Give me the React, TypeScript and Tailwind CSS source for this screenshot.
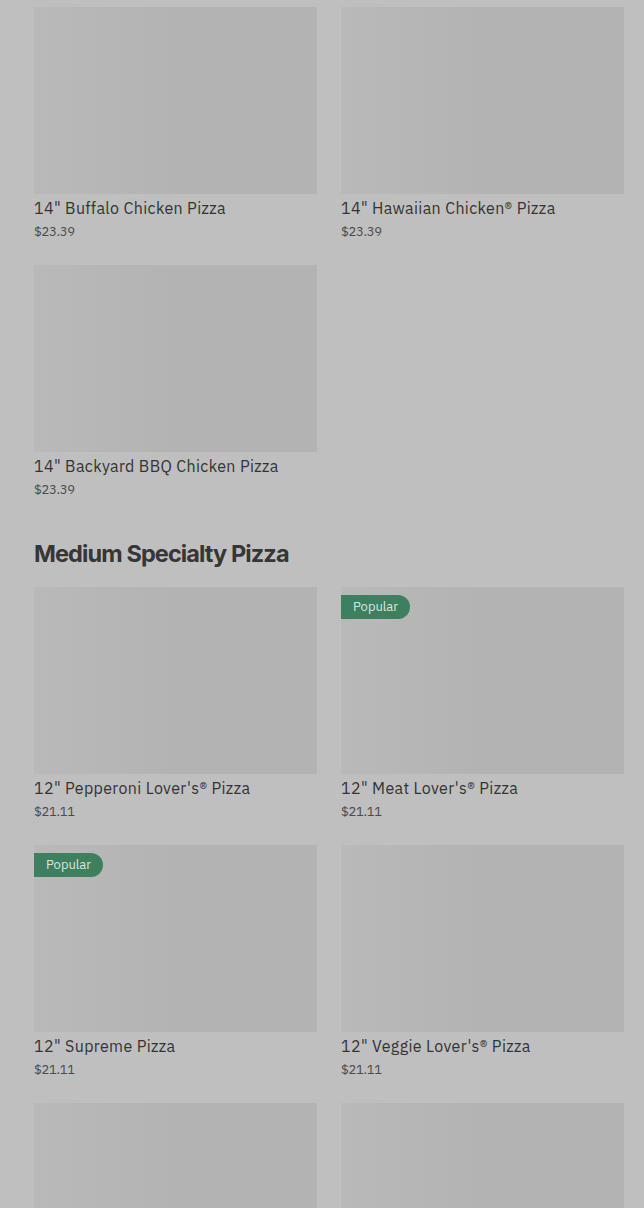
import React from "react";

type Pizza = { name?: string; price?: string; popular?: boolean };

const chicken: Pizza[] = [
  { name: "14\" Buffalo Chicken Pizza", price: "$23.39" },
  { name: "14\" Hawaiian Chicken® Pizza", price: "$23.39" },
  { name: "14\" Backyard BBQ Chicken Pizza", price: "$23.39" },
];

// last row is cut off by the frame, only the images show
const medium: Pizza[] = [
  { name: "12\" Pepperoni Lover's® Pizza", price: "$21.11" },
  { name: "12\" Meat Lover's® Pizza", price: "$21.11", popular: true },
  { name: "12\" Supreme Pizza", price: "$21.11", popular: true },
  { name: "12\" Veggie Lover's® Pizza", price: "$21.11" },
  {},
  {},
];

function PizzaCard({ item }: { item: Pizza }) {
  return (
    <div className="flex flex-col">
      {/* image placeholder */}
      <div className="relative h-[187px] w-full bg-gradient-to-r from-[#b9b9b9] via-[#b3b3b3] to-[#b3b3b3]">
        {item.popular && (
          <span className="absolute left-0 top-2 h-6 pl-3 pr-3 rounded-r-full bg-[#3e7f5f] text-[13px] leading-6 text-[#d9e6df]">
            Popular
          </span>
        )}
      </div>
      {item.name && (
        <>
          <div className="mt-[2px] text-[16px] leading-6 font-normal text-[#333333] tracking-[0.35px]">
            {item.name}
          </div>
          <div className="mt-[2px] text-[13px] leading-5 text-[#4a4a4a] tracking-[-0.3px]">{item.price}</div>
        </>
      )}
    </div>
  );
}

export default function App() {
  return (
    <div
      className="h-screen bg-[#bfbfbf] pl-[34px] pr-[20px] pt-[7px] overflow-hidden"
      style={{ fontFamily: "'IBM Plex Sans', 'Open Sans', 'Liberation Sans', sans-serif" }}
    >
      <div className="grid grid-cols-2 gap-x-6 gap-y-[23px]">
        {chicken.map((p, i) => (
          <PizzaCard key={i} item={p} />
        ))}
      </div>

      <h2
        className="mt-[38px] mb-[17px] text-[23.5px] leading-8 font-bold tracking-[-0.9px] text-[#363636]"
        style={{ fontFamily: "Inter, 'Liberation Sans', sans-serif" }}
      >
        Medium Specialty Pizza
      </h2>

      <div className="grid grid-cols-2 gap-x-6 gap-y-[23px]">
        {medium.map((p, i) => (
          <PizzaCard key={i} item={p} />
        ))}
      </div>
    </div>
  );
}
